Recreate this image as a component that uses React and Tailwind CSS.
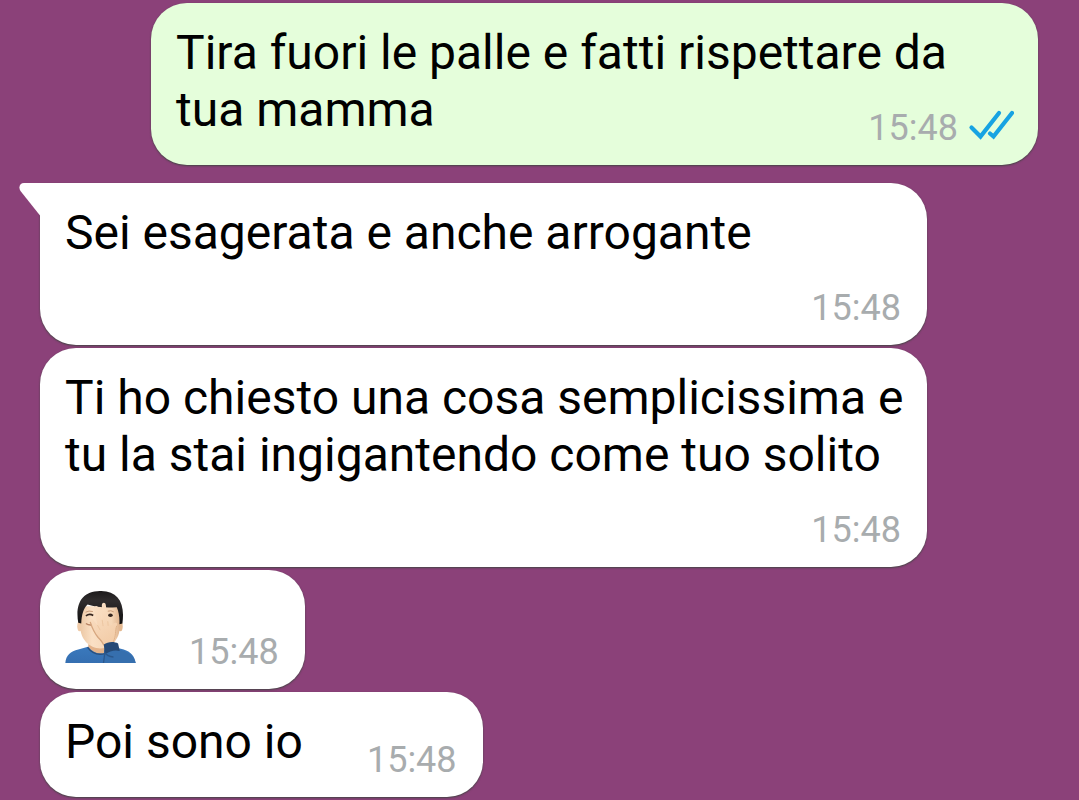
import React from "react";

const messages = [
  { id: 1, out: true, text: "Tira fuori le palle e fatti rispettare da tua mamma", time: "15:48" },
  { id: 2, tail: true, wide: true, text: "Sei esagerata e anche arrogante", time: "15:48" },
  { id: 3, wide: true, text: "Ti ho chiesto una cosa semplicissima e tu la stai ingigantendo come tuo solito", time: "15:48" },
  { id: 4, emoji: true, time: "15:48" },
  { id: 5, text: "Poi sono io", time: "15:48" },
];

const Checks = () => (
  <svg className="w-[46px] h-[38px]" viewBox="0 0 46 38" fill="none" stroke="#17a3e2" strokeWidth="4.200" strokeLinecap="round" role="img" aria-label="Letto">
    <path d="M3.500 18.500 12.500 27.500 31 4" />
    <path d="M22 24.500 25.500 27.500 44 4" />
  </svg>
);

const Tail = () => (
  <svg className="absolute top-0 -left-[21px] w-[22px] h-[34px]" viewBox="0 0 22 34" aria-hidden="true">
    <path d="M22 0H5C1 0-1 4 1.500 8L21 32.500H22Z" fill="#fff" />
  </svg>
);

const Facepalm = () => (
  <svg className="w-[71px] h-[72px]" viewBox="45 32 212 217" role="img" aria-label="Uomo che si copre il viso">
    <defs>
      <linearGradient id="skin" x1="0" x2="1">
        <stop offset="0" stopColor="#ecc8a5" />
        <stop offset="0.3" stopColor="#fae0c5" />
        <stop offset="0.8" stopColor="#f5d6b6" />
        <stop offset="1" stopColor="#e0b48e" />
      </linearGradient>
      <linearGradient id="hand" x1="0" y1="0" x2="0.4" y2="1">
        <stop offset="0" stopColor="#fbe2c8" />
        <stop offset="1" stopColor="#f3cda9" />
      </linearGradient>
      <linearGradient id="hair" x1="0" y1="0" x2="0" y2="1">
        <stop offset="0" stopColor="#1c1a1b" />
        <stop offset="0.3" stopColor="#302d2e" />
        <stop offset="1" stopColor="#0f0e0f" />
      </linearGradient>
      <linearGradient id="shirt" x1="0" y1="0" x2="0" y2="1">
        <stop offset="0" stopColor="#3a79bd" />
        <stop offset="1" stopColor="#356fb1" />
      </linearGradient>
    </defs>
    {/* shirt and neck */}
    <path d="M45 249c2-24 16-36 39-41l32-9h70l35 9c21 7 33 19 36 41Z" fill="url(#shirt)" />
    <path d="M115 180h50v39c-20 5-38-2-51-19Z" fill="#e3b38b" />
    <path d="M112 202c13 18 31 24 52 19" fill="none" stroke="#2a4f7c" strokeWidth="4" />
    {/* face */}
    <ellipse cx="88" cy="138" rx="7" ry="15" fill="#efcaa7" />
    <ellipse cx="211" cy="138" rx="7" ry="15" fill="#e3b890" />
    <path d="M90 78h119v62c0 38-26 65-58 65-34 0-61-28-61-65Z" fill="url(#skin)" />
    <path d="M84 128C74 72 94 33 149 32c54-1 77 34 68 98l-9 2c1-21-2-38-8-51-35 3-65-1-88-8-12 12-18 30-19 57Z" fill="url(#hair)" />
    {/* eyes, brow and mouth */}
    <path d="M106 96q10-6 22-2M173 93q9-4 18 2" fill="none" stroke="#c69a78" strokeWidth="3" />
    <path d="M107 107q11-8 22-1" fill="none" stroke="#34251e" strokeWidth="5" />
    <ellipse cx="181" cy="105" rx="7" ry="5" fill="#34251e" />
    <path d="M107 130q8 6 20 4" fill="none" stroke="#b98464" strokeWidth="4" />
    {/* hand over the face */}
    <path d="M163 200c-6-17-16-25-23-36-10-16-16-27-20-40-2-8 5-11 10-4l12 15-9-48c-2-11 9-14 12-3l11 35-1-45c1-9 11-9 12 0l6 49 9 12 10-6c8-4 11 1 8 8-5 11-2 23-3 35-1 12-6 15-7 22Z" fill="url(#hand)" />
    <path d="M142 135l8 15M156 119l3 19M173 123l1 14" fill="none" stroke="#e6bd97" strokeWidth="2" />
    <path d="M120 125c7 23 14 35 24 47 10 10 14 14 17 24" fill="none" stroke="#d6a67f" strokeWidth="4" />
    <path d="M200 137c-6 15-1 30-11 49" fill="none" stroke="#e0b38b" strokeWidth="3" />
    {/* sleeve */}
    <path d="M160 249c4-15 2-26 2-40 15-6 31-7 43-1 25 6 47 17 52 41Z" fill="#366fae" />
    <path d="M161 193c12-9 31-10 43-3l5 23c-15-4-29 0-45 10Z" fill="#264a77" />
    <path d="M160 249l4-31c5 8 14 12 26 13" fill="none" stroke="#2b588d" strokeWidth="4" />
  </svg>
);

const Time = ({ children, className = "" }) => (
  <span className={`flex items-center gap-[10px] text-[36px] leading-[42px] text-[#a8acae] ${className}`}>
    {children}
  </span>
);

const Message = ({ msg }) => {
  const side = msg.out ? "self-end ml-[111px] mb-[15px] bg-[#e5fedb]" : "self-start mr-[111px] bg-white";
  const width = msg.wide ? "w-[calc(100%-111px)]" : "";
  const corner = msg.tail ? "rounded-tl-none" : "";

  return (
    <li className={`relative flow-root rounded-[36px] pt-[21px] pr-5 pb-4 pl-[25px] shadow-[0_1px_2px_#444444] ${side} ${width} ${corner}`}>
      {msg.tail && <Tail />}
      {msg.emoji ? (
        <div className="flex items-end">
          <div className="pb-[10px]">
            <Facepalm />
          </div>
          <Time className="ml-[53px] mr-[6px]">{msg.time}</Time>
        </div>
      ) : (
        <>
          <p className={msg.wide ? "" : "inline"}>{msg.text}</p>
          <Time className={`float-right mt-[26px] ${msg.out ? "mr-1" : "mr-[6px] ml-16"}`}>
            {msg.time}
            {msg.out && <Checks />}
          </Time>
        </>
      )}
    </li>
  );
};

const App = () => {
  return (
    <main className="min-h-screen bg-[#8b4179] pt-[3px] pb-[3px] pl-10 pr-[41px] font-[Roboto,sans-serif] text-[48px] leading-[57px] text-black">
      <ul className="flex flex-col gap-[3px]">
        {messages.map((msg) => (
          <Message key={msg.id} msg={msg} />
        ))}
      </ul>
    </main>
  );
};

export default App;
